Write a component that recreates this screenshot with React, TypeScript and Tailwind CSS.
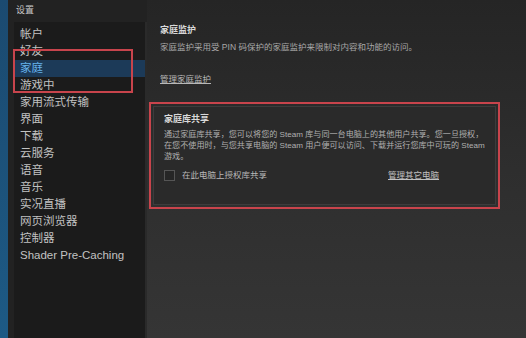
import React from "react";

const items = [
  "帐户",
  "好友",
  "家庭",
  "游戏中",
  "家用流式传输",
  "界面",
  "下载",
  "云服务",
  "语音",
  "音乐",
  "实况直播",
  "网页浏览器",
  "控制器",
  "Shader Pre-Caching",
];

export default function App() {
  return (
    <div
      className="relative w-[526px] h-[338px] flex overflow-hidden bg-[#222]"
      style={{ fontFamily: '"Liberation Sans", "Noto Sans CJK SC", sans-serif' }}
    >
      <div className="w-[8px] shrink-0 bg-gradient-to-b from-[#1b4a70] to-[#1d5a85]" />
      <div className="flex-1 min-w-0 flex flex-col bg-[#222]">
        <div className="h-[22px] flex items-center justify-between pl-[8px] pr-[6px]">
          <span className="text-[9px] text-[#c8c8c8]">设置</span>
          <span className="text-[11px] text-[#b8b8b8] leading-none">– ✕</span>
        </div>
        <div className="flex-1 flex min-w-0">
          <div className="w-[137px] shrink-0 pl-[6px] flex">
            <div className="flex-1 bg-[#1b1b1b] pt-[4px] flex flex-col">
              {items.map((t) => (
                <div
                  key={t}
                  className={
                    "h-[17px] leading-[17px] pl-[6px] text-[11.5px] whitespace-nowrap " +
                    (t === "家庭" ? "bg-[#1c3a58] text-[#67b3ec]" : "text-[#c2c2c2]")
                  }
                >
                  {t}
                </div>
              ))}
            </div>
          </div>
          <div className="w-[2px] shrink-0 bg-[#2a2a2a]" />
          <div className="flex-1 min-w-0 bg-gradient-to-b from-[#252525] via-[#2e2e2e] to-[#353535] -mt-[22px] pt-[24px] pl-[13px] pr-[26px]">
            <div className="text-[9px] font-bold text-[#d8d8d8] leading-[12px]">家庭监护</div>
            <div className="mt-[6px] text-[8.5px] text-[#a8a8a8] leading-[11px] whitespace-nowrap">
              家庭监护采用受 PIN 码保护的家庭监护来限制对内容和功能的访问。
            </div>
            <div className="mt-[21px] text-[8.5px] text-[#b8b8b8] underline leading-[11px]">管理家庭监护</div>
            <div className="mt-[17px] -ml-[11px] border-2 border-[#c8444c] p-[2px]">
              <div className="h-[99px] bg-[#2a2a2a] border border-[#3c3c3c] pl-[10px] pr-[4px] pt-[6px]">
                <div className="text-[9px] font-bold text-[#d8d8d8] leading-[12px]">家庭库共享</div>
                <div className="mt-[4px] text-[8.1px] text-[#b0b0b0] leading-[11px] whitespace-nowrap">
                  <div>通过家庭库共享，您可以将您的 Steam 库与同一台电脑上的其他用户共享。您一旦授权，</div>
                  <div>在您不使用时，与您共享电脑的 Steam 用户便可以访问、下载并运行您库中可玩的 Steam</div>
                  <div>游戏。</div>
                </div>
                <div className="mt-[7px] flex items-center">
                  <div className="w-[11px] h-[11px] border border-[#555] bg-[#262626]" />
                  <span className="ml-[7px] text-[8.5px] text-[#b8b8b8]">在此电脑上授权库共享</span>
                  <span className="ml-[121px] text-[8.5px] text-[#c0c0c0] underline">管理其它电脑</span>
                </div>
              </div>
            </div>
          </div>
        </div>
      </div>
      <div className="absolute left-[13px] top-[49px] w-[120px] h-[44px] border-2 border-[#c8444c]" />
    </div>
  );
}
